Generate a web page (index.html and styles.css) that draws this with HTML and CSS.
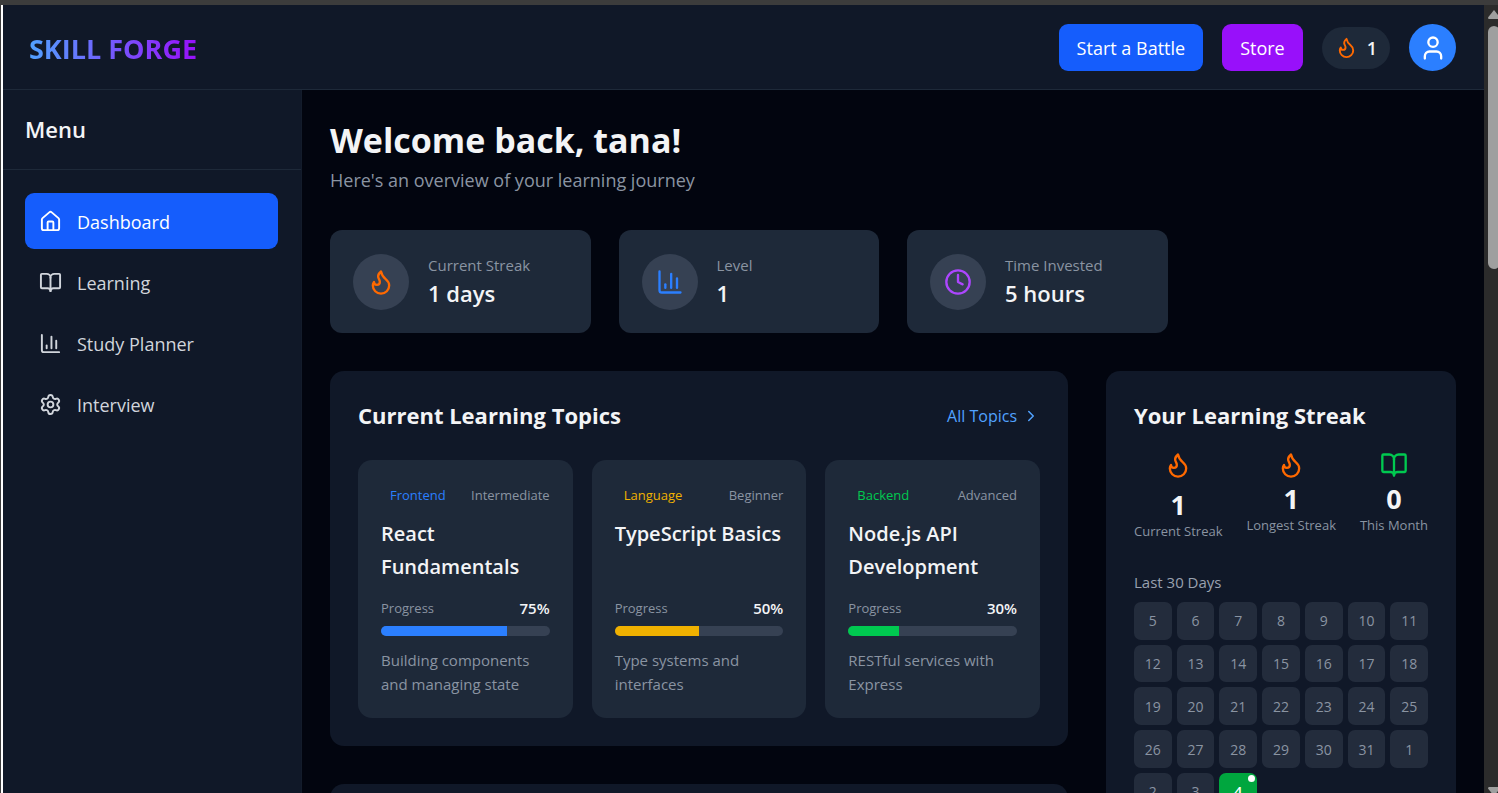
FILE: index.html
```html
<!DOCTYPE html>
<html lang="en">
<head>
<meta charset="utf-8">
<title>Skill Forge</title>
<link rel="stylesheet" href="styles.css">
</head>
<body>
<svg class="sprite" aria-hidden="true">
  <symbol id="flame" viewBox="0 0 24 24"><path d="M8.5 14.5A2.5 2.5 0 0 0 11 12c0-1.38-.5-2-1-3-1.072-2.143-.224-4.054 2-6 .5 2.5 2 4.9 4 6.5 2 1.6 3 3.5 3 5.5a7 7 0 1 1-14 0c0-1.153.433-2.294 1-3a2.5 2.5 0 0 0 2.5 2.5z"/></symbol>
  <symbol id="user" viewBox="0 0 24 24"><path d="M19 21v-2a4 4 0 0 0-4-4H9a4 4 0 0 0-4 4v2"/><circle cx="12" cy="7" r="4"/></symbol>
  <symbol id="house" viewBox="0 0 24 24"><path d="M15 21v-8a1 1 0 0 0-1-1h-4a1 1 0 0 0-1 1v8"/><path d="M3 10a2 2 0 0 1 .709-1.528l7-5.999a2 2 0 0 1 2.582 0l7 5.999A2 2 0 0 1 21 10v9a2 2 0 0 1-2 2H5a2 2 0 0 1-2-2z"/></symbol>
  <symbol id="book" viewBox="0 0 24 24"><path d="M12 7v14"/><path d="M3 18a1 1 0 0 1-1-1V4a1 1 0 0 1 1-1h5a4 4 0 0 1 4 4 4 4 0 0 1 4-4h5a1 1 0 0 1 1 1v13a1 1 0 0 1-1 1h-6a3 3 0 0 0-3 3 3 3 0 0 0-3-3z"/></symbol>
  <symbol id="chart" viewBox="0 0 24 24"><path d="M3 3v16a2 2 0 0 0 2 2h16"/><path d="M18 17V9"/><path d="M13 17V5"/><path d="M8 17v-3"/></symbol>
  <symbol id="gear" viewBox="0 0 24 24"><path d="M9.671 4.136a2.34 2.34 0 0 1 4.659 0 2.34 2.34 0 0 0 3.319 1.915 2.34 2.34 0 0 1 2.33 4.033 2.34 2.34 0 0 0 0 3.831 2.34 2.34 0 0 1-2.33 4.033 2.34 2.34 0 0 0-3.319 1.915 2.34 2.34 0 0 1-4.659 0 2.34 2.34 0 0 0-3.32-1.915 2.34 2.34 0 0 1-2.33-4.033 2.34 2.34 0 0 0 0-3.831A2.34 2.34 0 0 1 6.35 6.051a2.34 2.34 0 0 0 3.319-1.915"/><circle cx="12" cy="12" r="3"/></symbol>
  <symbol id="clock" viewBox="0 0 24 24"><circle cx="12" cy="12" r="10"/><path d="M12 6v6l4 2"/></symbol>
  <symbol id="chevron" viewBox="0 0 24 24"><path d="m9 18 6-6-6-6"/></symbol>
</svg>
<div class="window">
  <div class="app">
    <header class="topbar">
      <div class="logo">SKILL FORGE</div>
      <div class="actions">
        <button class="btn btn-blue" type="button">Start a Battle</button>
        <button class="btn btn-purple" type="button">Store</button>
        <div class="pill"><svg class="icon icon-sm orange"><use href="#flame"/></svg><span>1</span></div>
        <button class="avatar" type="button" aria-label="Profile"><svg class="icon icon-lg"><use href="#user"/></svg></button>
      </div>
    </header>
    <div class="body">
      <aside class="sidebar">
        <h2 class="menu-title">Menu</h2>
        <nav class="nav">
          <a class="nav-link active" href="#dashboard"><svg class="icon icon-sm"><use href="#house"/></svg><span>Dashboard</span></a>
          <a class="nav-link" href="#learning"><svg class="icon icon-sm"><use href="#book"/></svg><span>Learning</span></a>
          <a class="nav-link" href="#planner"><svg class="icon icon-sm"><use href="#chart"/></svg><span>Study Planner</span></a>
          <a class="nav-link" href="#interview"><svg class="icon icon-sm"><use href="#gear"/></svg><span>Interview</span></a>
        </nav>
      </aside>
      <main class="main">
        <div class="welcome">
          <h1>Welcome back, tana!</h1>
          <p>Here's an overview of your learning journey</p>
        </div>
        <section class="stats">
          <div class="stat"><div class="stat-icon orange"><svg class="icon icon-lg"><use href="#flame"/></svg></div><div><div class="stat-label">Current Streak</div><div class="stat-value">1 days</div></div></div>
          <div class="stat"><div class="stat-icon blue"><svg class="icon icon-lg"><use href="#chart"/></svg></div><div><div class="stat-label">Level</div><div class="stat-value">1</div></div></div>
          <div class="stat"><div class="stat-icon purple"><svg class="icon icon-lg"><use href="#clock"/></svg></div><div><div class="stat-label">Time Invested</div><div class="stat-value">5 hours</div></div></div>
        </section>
        <div class="columns">
          <div class="wide">
            <section class="panel">
              <div class="panel-head">
                <h2>Current Learning Topics</h2>
                <a class="all" href="#topics">All Topics<svg class="icon icon-xs"><use href="#chevron"/></svg></a>
              </div>
              <div class="topics">
                <article class="topic">
                  <div class="row"><span class="tag blue">Frontend</span><span class="level">Intermediate</span></div>
                  <h3>React Fundamentals</h3>
                  <div class="row"><span class="level">Progress</span><span class="percent">75%</span></div>
                  <div class="bar"><div class="fill fill-blue" style="width:75%"></div></div>
                  <p>Building components and managing state</p>
                </article>
                <article class="topic">
                  <div class="row"><span class="tag yellow">Language</span><span class="level">Beginner</span></div>
                  <h3>TypeScript Basics</h3>
                  <div class="row"><span class="level">Progress</span><span class="percent">50%</span></div>
                  <div class="bar"><div class="fill fill-yellow" style="width:50%"></div></div>
                  <p>Type systems and interfaces</p>
                </article>
                <article class="topic">
                  <div class="row"><span class="tag green">Backend</span><span class="level">Advanced</span></div>
                  <h3>Node.js API Development</h3>
                  <div class="row"><span class="level">Progress</span><span class="percent">30%</span></div>
                  <div class="bar"><div class="fill fill-green" style="width:30%"></div></div>
                  <p>RESTful services with Express</p>
                </article>
              </div>
            </section>
            <section class="panel next"></section>
          </div>
          <section class="panel">
            <h2>Your Learning Streak</h2>
            <div class="streaks">
              <div class="streak streak-first"><svg class="icon icon-lg orange"><use href="#flame"/></svg><strong>1</strong><span>Current Streak</span></div>
              <div class="streak"><svg class="icon icon-lg orange"><use href="#flame"/></svg><strong>1</strong><span>Longest Streak</span></div>
              <div class="streak"><svg class="icon icon-lg green"><use href="#book"/></svg><strong>0</strong><span>This Month</span></div>
            </div>
            <div class="days-title">Last 30 Days</div>
            <div class="days">
              <div>5</div><div>6</div><div>7</div><div>8</div><div>9</div><div>10</div><div>11</div>
              <div>12</div><div>13</div><div>14</div><div>15</div><div>16</div><div>17</div><div>18</div>
              <div>19</div><div>20</div><div>21</div><div>22</div><div>23</div><div>24</div><div>25</div>
              <div>26</div><div>27</div><div>28</div><div>29</div><div>30</div><div>31</div><div>1</div>
              <div>2</div><div>3</div><div class="today">4</div>
            </div>
          </section>
        </div>
      </main>
    </div>
  </div>
  <div class="scrollbar" aria-hidden="true">
    <svg class="arrow" viewBox="0 0 12 9"><path d="M6 0 12 7.500Q12 9 11 9H1Q0 9 0 7.500Z"/></svg>
    <div class="thumb"></div>
    <svg class="arrow arrow-down" viewBox="0 0 12 9"><path d="M6 9 12 1.500Q12 0 11 0H1Q0 0 0 1.500Z"/></svg>
  </div>
</div>
</body>
</html>
```
FILE: styles.css
```css
* { box-sizing: border-box; }

body {
  margin: 0;
  background: #02050f;
  color: #f3f4f6;
  font-family: "Open Sans", "Noto Sans", sans-serif;
  font-size: 18px;
}

h1, h2, h3, p { margin: 0; }
a { color: inherit; text-decoration: none; }
button { border: 0; padding: 0; font: inherit; color: #fff; }

.sprite { position: absolute; width: 0; height: 0; }

.icon {
  display: block;
  flex: none;
  fill: none;
  stroke: currentColor;
  stroke-width: 2;
  stroke-linecap: round;
  stroke-linejoin: round;
}
.icon-xs { width: 18px; height: 18px; }
.icon-sm { width: 23px; height: 23px; }
.icon-lg { width: 28px; height: 28px; }

.orange { color: #ff6900; }
.blue { color: #2b7fff; }
.purple { color: #ad46ff; }
.yellow { color: #f0b100; }
.green { color: #00c950; }

/* Window frame */
.window {
  display: flex;
  height: 100vh;
  overflow: hidden;
  border-top: 5px solid #3c3c3c;
  border-left: 1px solid #3c3c3c;
}
.app {
  flex: 1;
  min-width: 0;
  display: flex;
  flex-direction: column;
  border-left: 2px solid #fff;
}

/* Top bar */
.topbar {
  flex: none;
  display: flex;
  align-items: center;
  justify-content: space-between;
  padding: 19px 28px 18px 26px;
  background: #101828;
  border-bottom: 1px solid #1e2939;
}
.logo {
  padding-top: 2px;
  font-size: 27px;
  line-height: 36px;
  font-weight: 700;
  background: linear-gradient(90deg, #51a2ff, #9810fa);
  background-clip: text;
  -webkit-background-clip: text;
  color: transparent;
}
.actions { display: flex; align-items: center; gap: 19px; }
.btn { height: 47px; padding: 1px 18px 0; border-radius: 9px; }
.btn-blue { background: #155dfc; }
.btn-purple { background: #9810fa; }
.pill {
  display: flex;
  align-items: center;
  gap: 9px;
  height: 42px;
  padding: 0 13px;
  border-radius: 21px;
  background: #1e2939;
  font-weight: 600;
}
.avatar {
  display: grid;
  place-items: center;
  width: 47px;
  height: 47px;
  border-radius: 50%;
  background: #2b7fff;
}

/* Sidebar */
.body { flex: 1; min-height: 0; display: flex; }
.sidebar {
  flex: none;
  width: 299px;
  background: #101828;
  border-right: 1px solid #131c2b;
}
.menu-title {
  padding: 23px 22px;
  border-bottom: 1px solid #1e2939;
  font-size: 22px;
  line-height: 33px;
  font-weight: 600;
}
.nav { display: grid; gap: 5px; padding: 23px 23px 0 22px; }
.nav-link {
  display: flex;
  align-items: center;
  gap: 15px;
  height: 56px;
  padding: 0 14px;
  border-radius: 9px;
  color: #d1d5dc;
}
.nav-link span { padding-top: 2px; }
.nav-link.active { background: #155dfc; color: #fff; }

/* Main content */
.main { flex: 1; min-width: 0; overflow: hidden; padding: 28px; }
.welcome { margin-bottom: 36px; }
.welcome h1 { font-size: 34px; line-height: 45px; font-weight: 700; }
.welcome p { margin-top: 3px; line-height: 28px; color: #8a94a2; }

.stats {
  display: grid;
  grid-template-columns: repeat(4, 1fr);
  gap: 28px;
  margin-bottom: 38px;
}
.stat {
  display: flex;
  align-items: center;
  gap: 19px;
  padding: 23px;
  border-radius: 12px;
  background: #1e2939;
}
.stat-icon {
  display: grid;
  place-items: center;
  width: 56px;
  height: 56px;
  border-radius: 50%;
  background: #364153;
}
.stat-label { font-size: 15px; line-height: 24px; color: #8a94a2; }
.stat-value { font-size: 22px; line-height: 33px; font-weight: 600; }

.columns {
  display: grid;
  grid-template-columns: repeat(3, 1fr);
  gap: 38px;
}
.wide { grid-column: span 2; display: grid; gap: 38px; align-content: start; }
.panel { padding: 28px; border-radius: 14px; background: #101828; }
.panel h2 { font-size: 22px; line-height: 33px; font-weight: 700; }
.next { height: 300px; }
.panel-head {
  display: flex;
  align-items: center;
  justify-content: space-between;
  margin-bottom: 28px;
}
.all {
  display: flex;
  align-items: center;
  gap: 5px;
  font-size: 16px;
  color: #51a2ff;
}

.topics { display: grid; grid-template-columns: repeat(3, 1fr); gap: 19px; }
.topic { padding: 23px 23px 22px; border-radius: 14px; background: #1e2939; }
.row {
  display: flex;
  align-items: center;
  justify-content: space-between;
  height: 23px;
}
.tag { padding-left: 9px; font-size: 13px; }
.level { font-size: 13px; color: #8a94a2; }
.percent { font-size: 15px; font-weight: 600; }
.topic h3 {
  min-height: 66px;
  margin: 11px 0 13px;
  font-size: 20px;
  line-height: 33px;
  font-weight: 600;
}
.bar {
  height: 10px;
  margin: 7px 0 12px;
  border-radius: 5px;
  overflow: hidden;
  background: #364153;
}
.fill { height: 100%; }
.fill-blue { background: #2b7fff; }
.fill-yellow { background: #f0b100; }
.fill-green { background: #00c950; }
.topic p { font-size: 15px; line-height: 24px; color: #8a94a2; }

/* Streak panel */
.streaks {
  display: flex;
  align-items: flex-start;
  justify-content: space-between;
  margin: 19px 0 30px;
}
.streak { display: grid; justify-items: center; }
.streak strong { margin-top: 3px; font-size: 27px; line-height: 33px; font-weight: 700; }
.streak span { font-size: 13px; line-height: 20px; color: #8a94a2; }
.streak-first strong { margin-top: 9px; }
.days-title { margin-bottom: 8px; font-size: 15px; line-height: 23px; color: #99a1af; }
.days { display: grid; grid-template-columns: repeat(7, 1fr); gap: 5px; }
.days div {
  position: relative;
  display: grid;
  place-items: center;
  aspect-ratio: 1;
  border-radius: 7px;
  background: #232c3c;
  font-size: 14px;
  color: #8a94a2;
}
.days .today { background: #00a63e; color: #fff; font-weight: 600; }
.today::after {
  content: "";
  position: absolute;
  top: 2px;
  right: 2px;
  width: 7px;
  height: 7px;
  border-radius: 50%;
  background: #fff;
}

/* Scrollbar */
.scrollbar {
  flex: none;
  width: 14px;
  display: flex;
  flex-direction: column;
  align-items: flex-start;
  padding: 5px 0 0 4px;
  overflow: hidden;
  background: #2b2b2b;
}
.arrow { flex: none; width: 12px; height: 9px; fill: #9f9f9f; }
.thumb {
  flex: none;
  width: 12px;
  height: 31%;
  margin-top: 7px;
  border-radius: 6px;
  background: #9f9f9f;
}
.arrow-down { margin-top: auto; margin-bottom: -3px; }
```
